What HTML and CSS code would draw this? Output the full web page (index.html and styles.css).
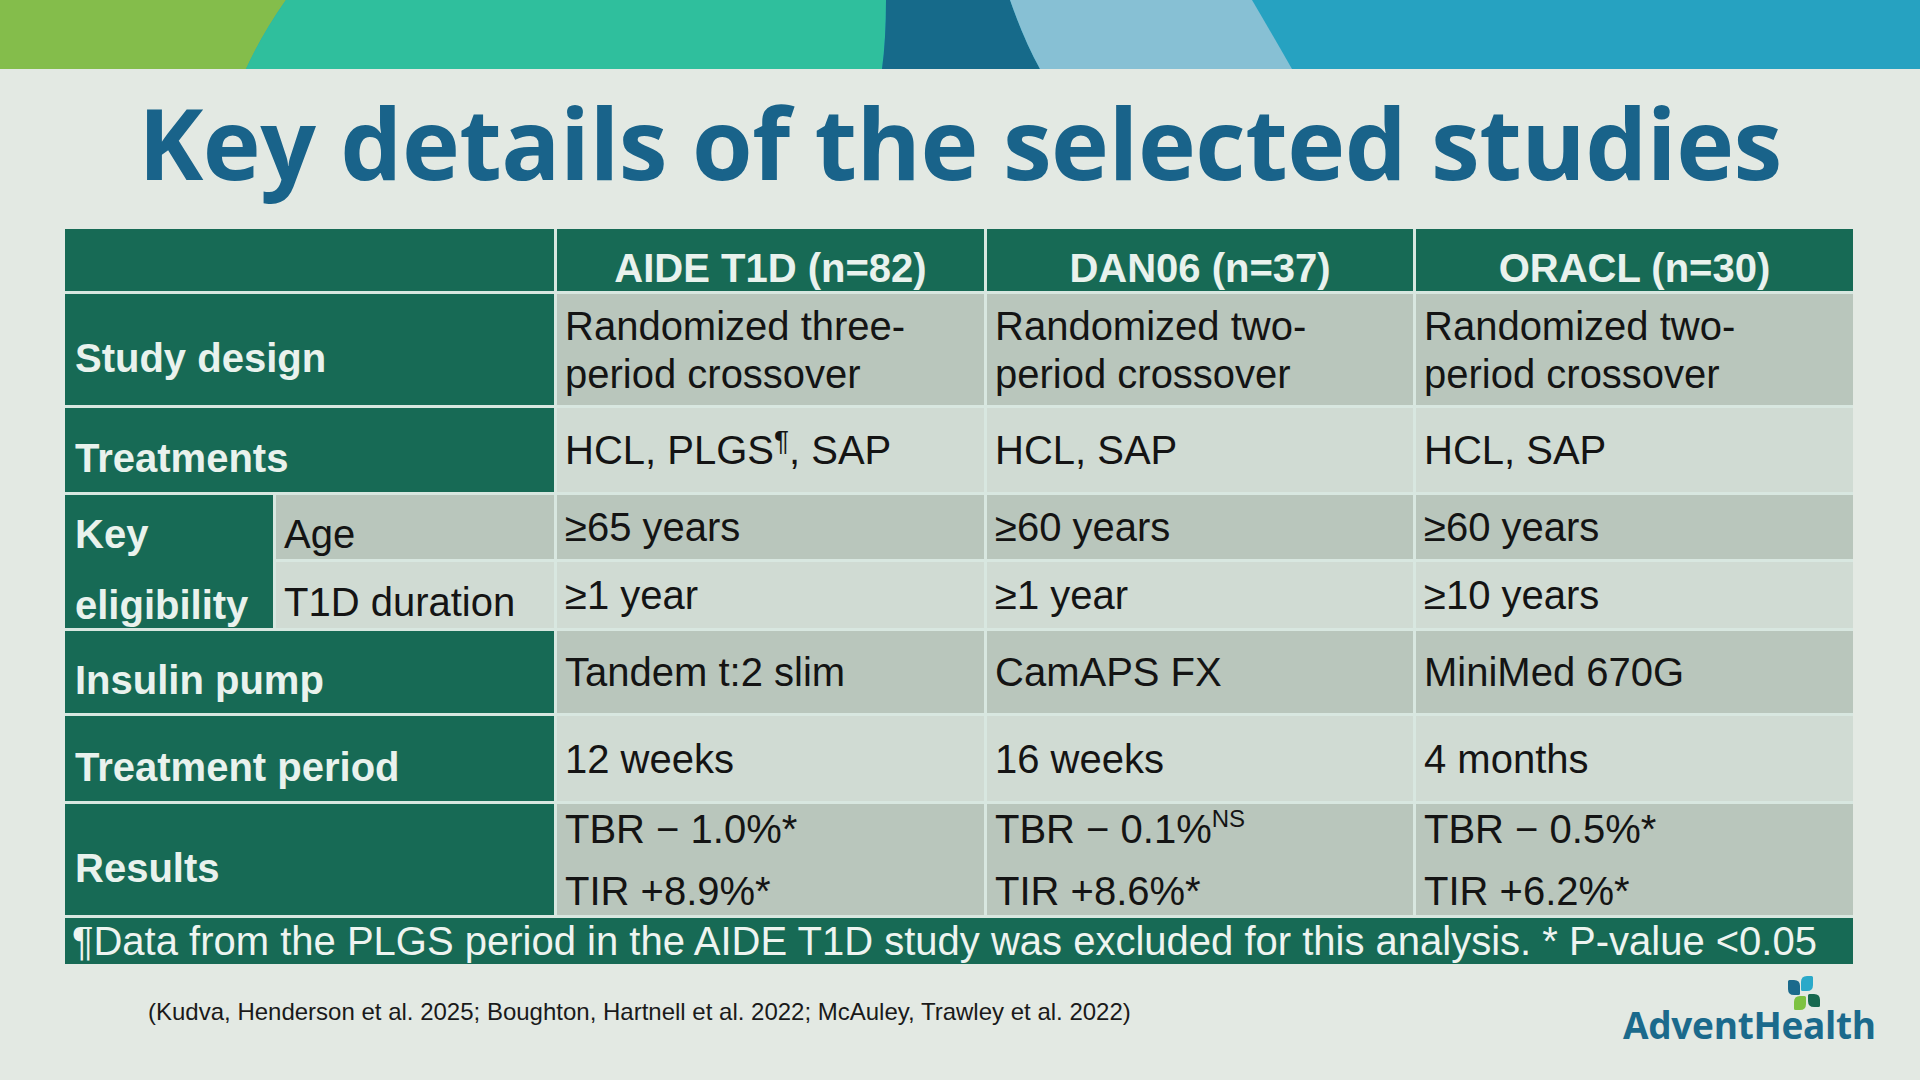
FILE: index.html
```html
<!DOCTYPE html>
<html lang="en">
<head>
<meta charset="utf-8">
<title>Key details of the selected studies</title>
<link rel="stylesheet" href="styles.css">
</head>
<body>
<div class="slide">
  <svg class="banner" width="1920" height="69" viewBox="0 0 1920 69" preserveAspectRatio="none">
    <rect x="0" y="0" width="1920" height="69" fill="#26a2c1"/>
    <path d="M0 0 H286 Q262 34 246 69 H0 Z" fill="#84bd4b"/>
    <path d="M286 0 H886 Q886 40 882 69 H246 Q262 34 286 0 Z" fill="#2fbf9d"/>
    <path d="M886 0 H1010 Q1024 40 1040 69 H882 Q886 40 886 0 Z" fill="#166a8a"/>
    <path d="M1010 0 H1252 Q1272 34 1292 69 H1040 Q1024 40 1010 0 Z" fill="#87c0d4"/>
  </svg>

  <h1 class="title">Key details of the selected studies</h1>

  <div class="table">
    <div class="cell head corner"></div>
    <div class="cell head"><span>AIDE T1D (n=82)</span></div>
    <div class="cell head"><span>DAN06 (n=37)</span></div>
    <div class="cell head"><span>ORACL (n=30)</span></div>

    <div class="cell label wide"><span>Study design</span></div>
    <div class="cell dark"><span>Randomized three-<br>period crossover</span></div>
    <div class="cell dark"><span>Randomized two-<br>period crossover</span></div>
    <div class="cell dark"><span>Randomized two-<br>period crossover</span></div>

    <div class="cell label wide"><span>Treatments</span></div>
    <div class="cell light"><span>HCL, PLGS<sup class="para">¶</sup>, SAP</span></div>
    <div class="cell light"><span>HCL, SAP</span></div>
    <div class="cell light"><span>HCL, SAP</span></div>

    <div class="cell label key"><span>Key<br>eligibility</span></div>
    <div class="cell dark sub"><span>Age</span></div>
    <div class="cell dark"><span>≥65 years</span></div>
    <div class="cell dark"><span>≥60 years</span></div>
    <div class="cell dark"><span>≥60 years</span></div>

    <div class="cell light sub"><span>T1D duration</span></div>
    <div class="cell light"><span>≥1 year</span></div>
    <div class="cell light"><span>≥1 year</span></div>
    <div class="cell light"><span>≥10 years</span></div>

    <div class="cell label wide"><span>Insulin pump</span></div>
    <div class="cell dark"><span>Tandem t:2 slim</span></div>
    <div class="cell dark"><span>CamAPS FX</span></div>
    <div class="cell dark"><span>MiniMed 670G</span></div>

    <div class="cell label wide"><span>Treatment period</span></div>
    <div class="cell light"><span>12 weeks</span></div>
    <div class="cell light"><span>16 weeks</span></div>
    <div class="cell light"><span>4 months</span></div>

    <div class="cell label wide"><span>Results</span></div>
    <div class="cell dark results"><span>TBR − 1.0%*<br>TIR +8.9%*</span></div>
    <div class="cell dark results"><span>TBR − 0.1%<sup class="ns">NS</sup><br>TIR +8.6%*</span></div>
    <div class="cell dark results"><span>TBR − 0.5%*<br>TIR +6.2%*</span></div>

    <div class="cell note"><span>¶Data from the PLGS period in the AIDE T1D study was excluded for this analysis. * P-value &lt;0.05</span></div>
  </div>

  <div class="footer">
    <p class="citation">(Kudva, Henderson et al. 2025; Boughton, Hartnell et al. 2022; McAuley, Trawley et al. 2022)</p>
    <div class="logo">
      <svg class="logo-mark" width="38" height="36" viewBox="0 0 38 36">
        <path d="M3.5 4 L8 4 Q14 4 14 10 L14 17.5 Q14 19 12.5 19 L8 19 Q2 19 2 13 L2 5.5 Q2 4 3.5 4 Z" fill="#1b6a8c"/>
        <path d="M21 0 L25.5 0 Q27 0 27 1.5 L27 9 Q27 15 21 15 L16.5 15 Q15 15 15 13.5 L15 6 Q15 0 21 0 Z" fill="#2aa9c9"/>
        <path d="M14 20 L18.5 20 Q20 20 20 21.5 L20 28 Q20 34 14 34 L9.5 34 Q8 34 8 32.5 L8 26 Q8 20 14 20 Z" fill="#7dc242"/>
        <path d="M23.5 18 L28 18 Q34 18 34 24 L34 29.5 Q34 31 32.5 31 L28 31 Q22 31 22 25 L22 19.5 Q22 18 23.5 18 Z" fill="#17684f"/>
      </svg>
      <span class="logo-text">AdventHealth</span>
    </div>
  </div>
</div>
</body>
</html>
```

FILE: styles.css
```css
* { box-sizing: border-box; }

html, body {
  margin: 0;
  padding: 0;
}

body {
  width: 1920px;
  height: 1080px;
  overflow: hidden;
  background: #e3e9e3;
  font-family: "Liberation Sans", Arial, sans-serif;
}

.slide {
  width: 1920px;
  height: 1080px;
  display: flex;
  flex-direction: column;
}

.banner {
  display: block;
  width: 1920px;
  height: 69px;
}

.title {
  margin: 13px 0 0;
  height: 120px;
  line-height: 120px;
  text-align: center;
  font-family: "Open Sans", "Liberation Sans", sans-serif;
  font-weight: 700;
  font-size: 98px;
  color: #19638a;
  letter-spacing: -0.5px;
  white-space: nowrap;
}

.table {
  margin: 27px 0 0 65px;
  width: 1788px;
  display: grid;
  grid-template-columns: 208px 278px 427px 426px 437px;
  grid-template-rows: 62px 111px 84px 64px 66px 82px 85px 111px 46px;
  gap: 3px;
  background: #d8e7e0;
}

.cell {
  display: flex;
  align-items: center;
  font-size: 40px;
  line-height: 48px;
  color: #141414;
  padding-left: 8px;
  white-space: nowrap;
}

.head {
  background: #176a55;
  color: #e9f2ed;
  font-weight: 700;
  justify-content: center;
  padding: 16px 0 0;
}

.corner {
  grid-column: 1 / 3;
}

.label {
  background: #176a55;
  color: #e9f2ed;
  font-weight: 700;
  padding: 16px 0 0 10px;
}

.wide {
  grid-column: 1 / 3;
}

.key {
  grid-column: 1;
  grid-row: 4 / 6;
  line-height: 71px;
}

.dark { background: #b9c6bc; }
.light { background: #d0dbd3; }

.sub {
  padding-top: 14px;
}

.results {
  line-height: 62px;
}

.para {
  font-size: 28px;
  line-height: 0;
  vertical-align: 14px;
}

.ns {
  font-size: 24px;
  line-height: 0;
  vertical-align: 16px;
}

.note {
  grid-column: 1 / -1;
  background: #176a55;
  color: #eef4f0;
  padding-left: 7px;
  line-height: 46px;
  font-size: 40px;
}

.footer {
  display: flex;
  justify-content: space-between;
  align-items: flex-start;
  padding: 0 45px 0 148px;
}

.citation {
  margin: 35px 0 0;
  font-size: 24px;
  line-height: 26px;
  color: #1a1a1a;
  white-space: nowrap;
}

.logo {
  margin-top: 12px;
  display: flex;
  flex-direction: column;
  align-items: flex-start;
  width: 252px;
}

.logo-mark {
  display: block;
  margin-left: 163px;
  margin-bottom: -7px;
}

.logo-text {
  font-family: "Open Sans", "Liberation Sans", sans-serif;
  font-weight: 700;
  font-size: 37px;
  line-height: 40px;
  letter-spacing: -0.3px;
  color: #1b6a8c;
}
```
